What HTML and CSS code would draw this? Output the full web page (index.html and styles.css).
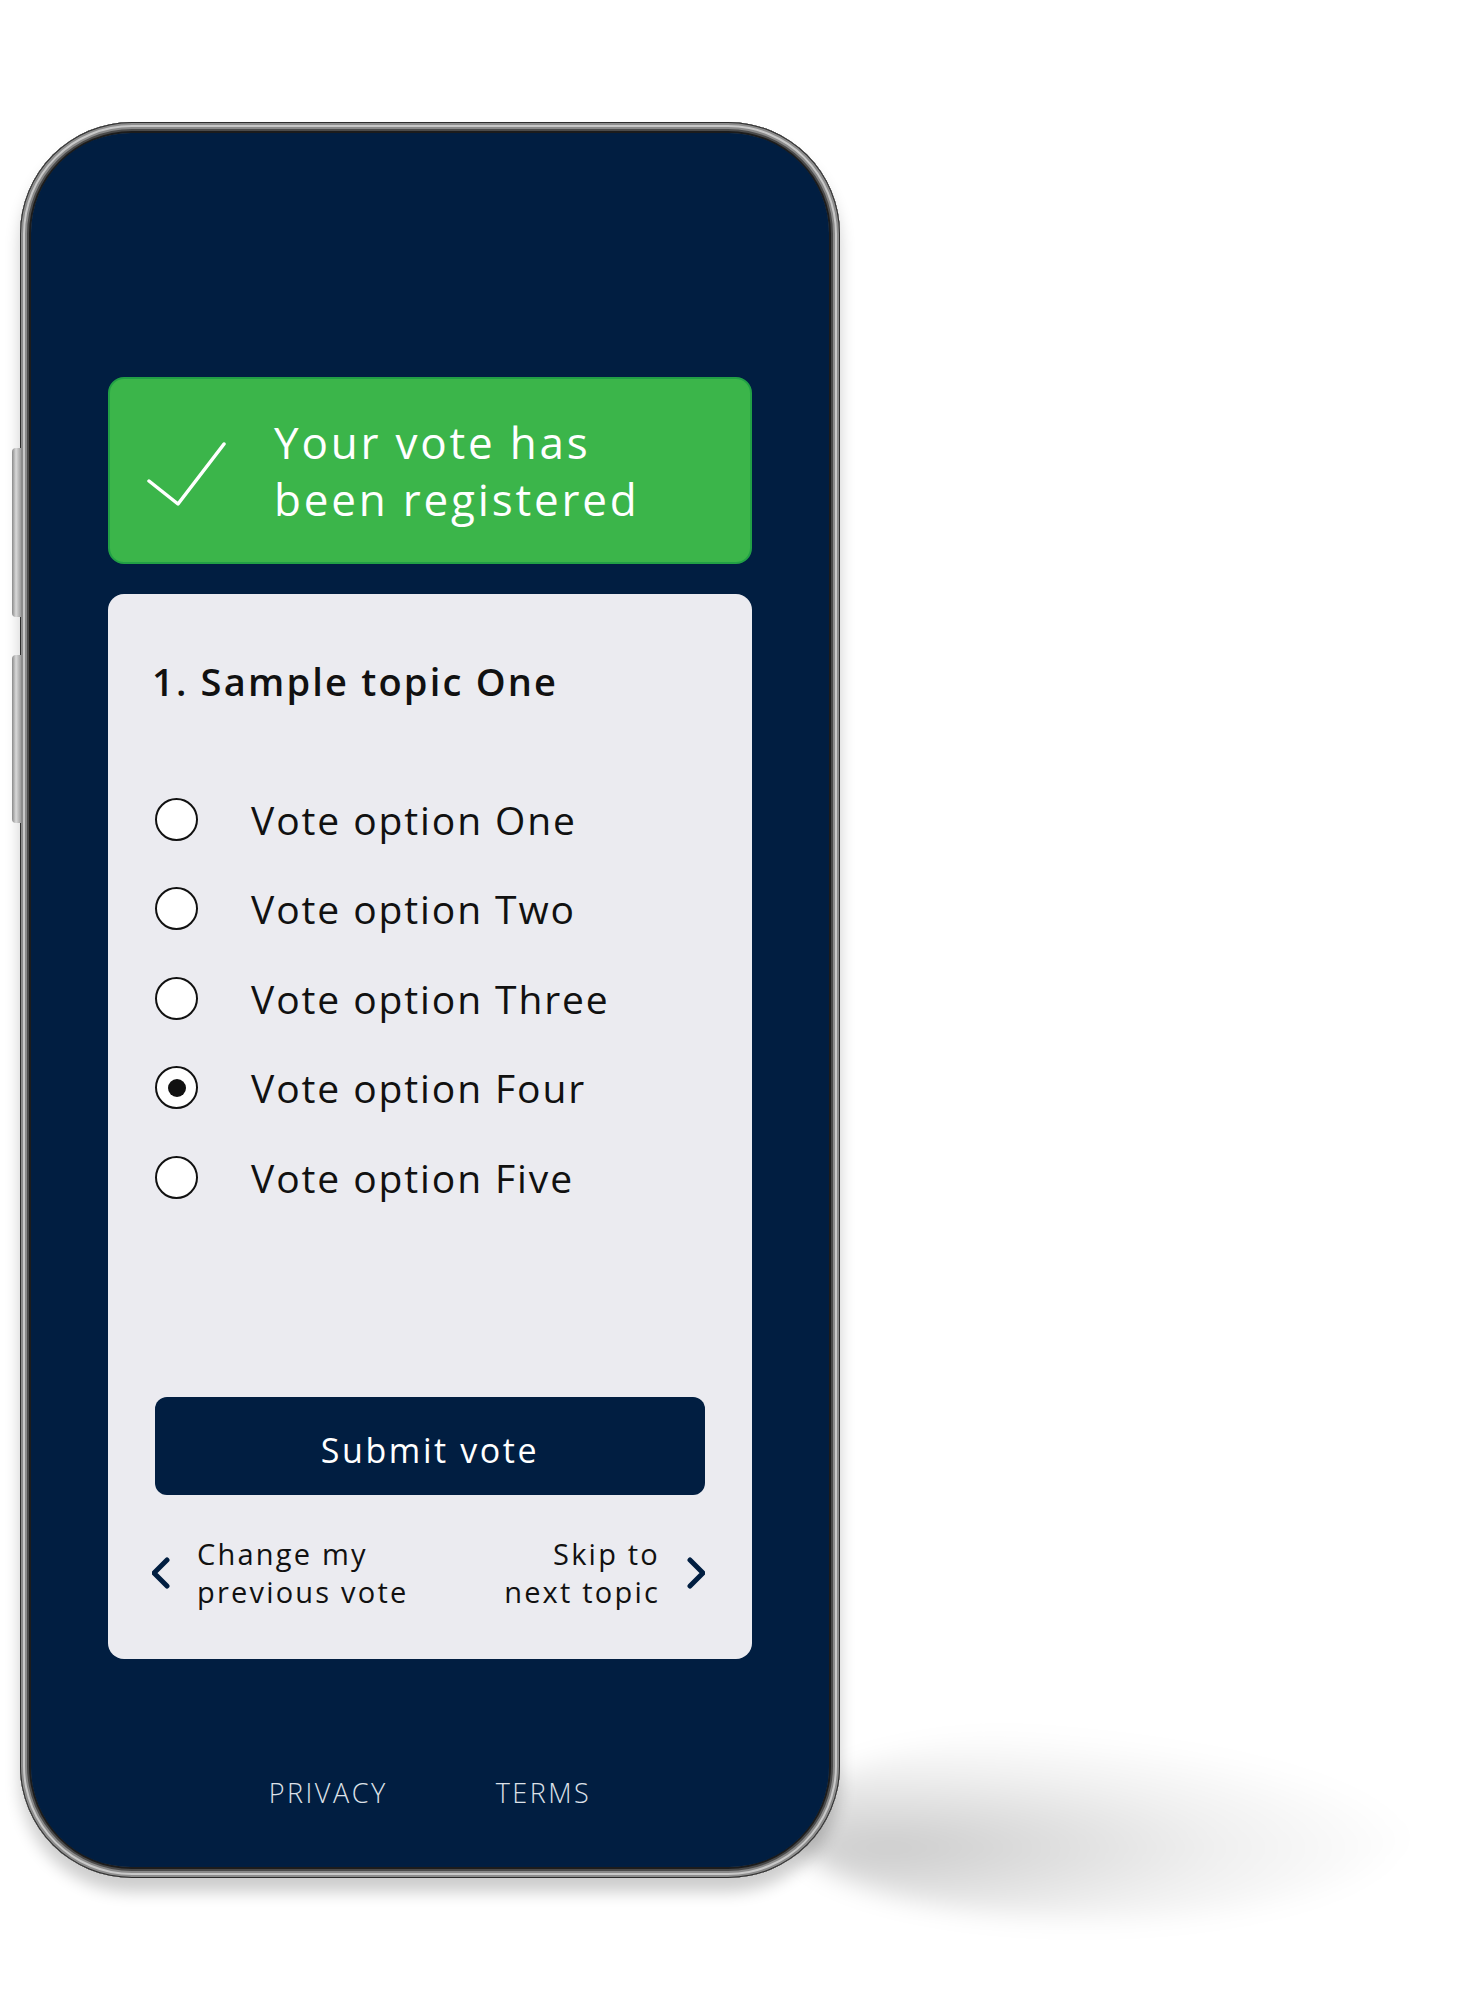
FILE: index.html
```html
<!DOCTYPE html>
<html lang="en">
<head>
    <meta charset="UTF-8">
    <meta name="viewport" content="width=device-width, initial-scale=1.0">
    <title>Vote registered</title>
    <link rel="stylesheet" href="styles.css">
</head>
<body>
    <div class="scene">
        <div class="floor-shadow"></div>
        <div class="phone">
            <span class="side-btn side-btn-top"></span>
            <span class="side-btn side-btn-bottom"></span>
            <div class="screen">
                <div class="notice">
                    <svg class="notice-check" width="80" height="66" viewBox="0 0 80 66">
                        <polyline points="2,40 31,63 77,3" fill="none" stroke="#fff" stroke-width="3.5" stroke-linecap="round" stroke-linejoin="round"/>
                    </svg>
                    <p class="notice-text">Your vote has<br>been registered</p>
                </div>

                <div class="ballot">
                    <h2 class="ballot-title">1. Sample topic One</h2>

                    <ul class="options">
                        <li class="option"><span class="radio"></span>Vote option One</li>
                        <li class="option"><span class="radio"></span>Vote option Two</li>
                        <li class="option"><span class="radio"></span>Vote option Three</li>
                        <li class="option"><span class="radio checked"></span>Vote option Four</li>
                        <li class="option"><span class="radio"></span>Vote option Five</li>
                    </ul>

                    <button class="submit-btn">Submit vote</button>

                    <div class="ballot-nav">
                        <a class="nav-link">
                            <svg width="20" height="32" viewBox="0 0 20 32">
                                <polyline points="15,3 2,16 15,29" fill="none" stroke="#011e41" stroke-width="5" stroke-linecap="round" stroke-linejoin="round"/>
                            </svg>
                            <span>Change my<br>previous vote</span>
                        </a>
                        <a class="nav-link nav-next">
                            <span>Skip to<br>next topic</span>
                            <svg width="20" height="32" viewBox="0 0 20 32">
                                <polyline points="5,3 18,16 5,29" fill="none" stroke="#011e41" stroke-width="5" stroke-linecap="round" stroke-linejoin="round"/>
                            </svg>
                        </a>
                    </div>
                </div>

                <div class="footer-links">
                    <a>PRIVACY</a>
                    <a>TERMS</a>
                </div>
            </div>
        </div>
    </div>
</body>
</html>
```

FILE: styles.css
```css
* {
    margin: 0;
    padding: 0;
    box-sizing: border-box;
}

body {
    background-color: #fff;
    font-family: 'Open Sans', 'Noto Sans', sans-serif;
    color: #111;
}

.scene {
    position: relative;
    padding: 122px 0 0 20px;
    height: 2000px;
    overflow: hidden;
}

/* soft shadow cast to the right of the phone */
.floor-shadow {
    position: absolute;
    left: 790px;
    top: 1730px;
    width: 620px;
    height: 190px;
    border-radius: 50%;
    background: radial-gradient(ellipse at 16% 62%, rgba(0, 0, 0, 0.2), rgba(0, 0, 0, 0.06) 45%, rgba(0, 0, 0, 0) 72%);
    filter: blur(12px);
}

.phone {
    position: relative;
    width: 820px;
    height: 1756px;
    padding: 11px;
    border-radius: 112px;
    background-color: #555;
    box-shadow:
        inset 0 0 0 1px #2e2e2e,
        inset 0 0 0 3px #8c8c8c,
        inset 0 0 0 5px #c8c8c8,
        inset 0 0 0 7px #8a8a8a,
        inset 0 0 0 9px #4a4a4a,
        inset 0 0 0 11px #1c1c1c,
        0 14px 16px rgba(0, 0, 0, 0.2);
}

.side-btn {
    position: absolute;
    left: -8px;
    width: 9px;
    border-radius: 4px 0 0 4px;
    background: linear-gradient(90deg, #8a8a8a, #d9d9d9 45%, #9c9c9c);
}

.side-btn-top {
    top: 326px;
    height: 169px;
}

.side-btn-bottom {
    top: 533px;
    height: 168px;
}

.screen {
    height: 100%;
    border-radius: 100px;
    background-color: #011e41;
    padding: 244px 77px 0;
    display: flex;
    flex-direction: column;
}

.notice {
    display: flex;
    align-items: center;
    height: 187px;
    padding-left: 37px;
    gap: 47px;
    background-color: #3bb54a;
    border: 2px solid #22a045;
    border-radius: 16px;
}

.notice-check {
    flex-shrink: 0;
    margin-top: 6px;
}

.notice-text {
    color: #fff;
    font-size: 44px;
    line-height: 57px;
    letter-spacing: 2.8px;
}

.ballot {
    margin-top: 30px;
    background-color: #ebebf0;
    border-radius: 16px;
    padding: 64px 47px 48px;
}

.ballot-title {
    font-size: 38px;
    line-height: 46px;
    font-weight: 600;
    letter-spacing: 2.2px;
    margin-left: -3px;
}

.options {
    list-style: none;
    margin-top: 92px;
    display: flex;
    flex-direction: column;
    gap: 43.5px;
}

.option {
    display: flex;
    align-items: center;
    height: 46px;
    font-size: 39px;
    letter-spacing: 1.9px;
    gap: 53px;
}

.radio {
    width: 43px;
    height: 43px;
    border: 2.5px solid #111;
    border-radius: 50%;
    background-color: #fff;
    display: flex;
    align-items: center;
    justify-content: center;
    flex-shrink: 0;
}

.radio.checked::after {
    content: "";
    width: 18px;
    height: 18px;
    border-radius: 50%;
    background-color: #111;
}

.submit-btn {
    display: block;
    width: 100%;
    height: 98px;
    margin-top: 197px;
    padding-top: 8px;
    border: none;
    border-radius: 12px;
    background-color: #011e41;
    color: #fff;
    font-family: inherit;
    font-size: 34px;
    font-weight: 500;
    letter-spacing: 2.6px;
}

.ballot-nav {
    display: flex;
    justify-content: space-between;
    align-items: center;
    margin-top: 40px;
}

.nav-link {
    display: flex;
    align-items: center;
    gap: 25px;
    font-size: 29px;
    line-height: 38px;
    letter-spacing: 2.2px;
    color: #111;
}

.nav-link:first-child {
    margin-left: -3px;
}

.nav-next {
    text-align: right;
}

.footer-links {
    display: flex;
    justify-content: center;
    gap: 108px;
    margin-top: 117px;
}

.footer-links a {
    color: #dde1e8;
    font-size: 27px;
    line-height: 34px;
    font-weight: 300;
    letter-spacing: 2.5px;
}
```
